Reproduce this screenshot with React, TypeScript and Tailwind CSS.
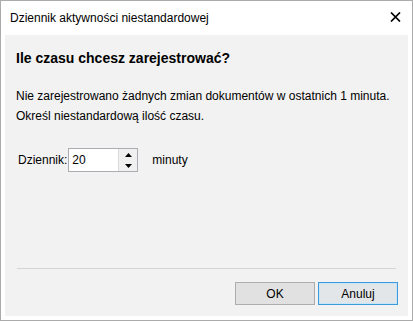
export default function App() {
  return (
    <div className="w-[413px] h-[321px] border border-[#ababab] bg-white flex flex-col px-[4px] pb-[4px] font-['Liberation_Sans',Arial,sans-serif] text-[12px] text-black">
      {/* Title bar */}
      <div className="h-[34px] flex items-center justify-between pl-[5px] pr-[7px]">
        <span className="leading-[16px]">Dziennik aktywności niestandardowej</span>
        <svg width="11" height="10" viewBox="0 0 11 10" className="mt-[-2px]">
          <path d="M1 0.5 L10 9.5 M10 0.5 L1 9.5" stroke="#000" strokeWidth="1.7" fill="none" />
        </svg>
      </div>

      {/* Body */}
      <div className="flex-1 bg-[#f2f2f2] flex flex-col px-[11px] pb-[11px]">
        <h1 className="mt-[13px] text-[14px] font-bold leading-[20px]">Ile czasu chcesz zarejestrować?</h1>
        <p className="mt-[18px] leading-[20px]">
          Nie zarejestrowano żadnych zmian dokumentów w ostatnich 1 minuta.
          <br />
          Określ niestandardową ilość czasu.
        </p>

        <div className="mt-[22px] flex items-center h-[24px]">
          <span className="ml-[2px] leading-[16px]">Dziennik:</span>
          <div className="ml-[1px] flex w-[70px] h-[24px] border border-[#abadb3] bg-white">
            <div className="flex-1 flex items-center pl-[3px]">20</div>
            <div className="w-[19px] flex flex-col items-center justify-center gap-[7px] bg-[#f0f0f0] border-l border-[#d9d9d9]">
              <svg width="7" height="4" viewBox="0 0 7 4"><path d="M3.5 0 L7 4 L0 4 Z" fill="#000" /></svg>
              <svg width="7" height="4" viewBox="0 0 7 4"><path d="M0 0 L7 0 L3.5 4 Z" fill="#000" /></svg>
            </div>
          </div>
          <span className="ml-[14px] leading-[16px]">minuty</span>
        </div>

        <div className="flex-1" />
        <div className="h-px bg-[#d5d5d5] ml-[1px] mr-[1px]" />

        <div className="mt-[13px] flex justify-end gap-[3px] mr-[-1px]">
          <button className="w-[80px] h-[23px] border border-[#adadad] bg-[#e1e1e1] leading-none">OK</button>
          <button className="w-[80px] h-[23px] border border-[#3c9ad8] bg-[#e3e6e8] shadow-[inset_0_0_0_1px_#c9e6f8] leading-none">Anuluj</button>
        </div>
      </div>
    </div>
  );
}
